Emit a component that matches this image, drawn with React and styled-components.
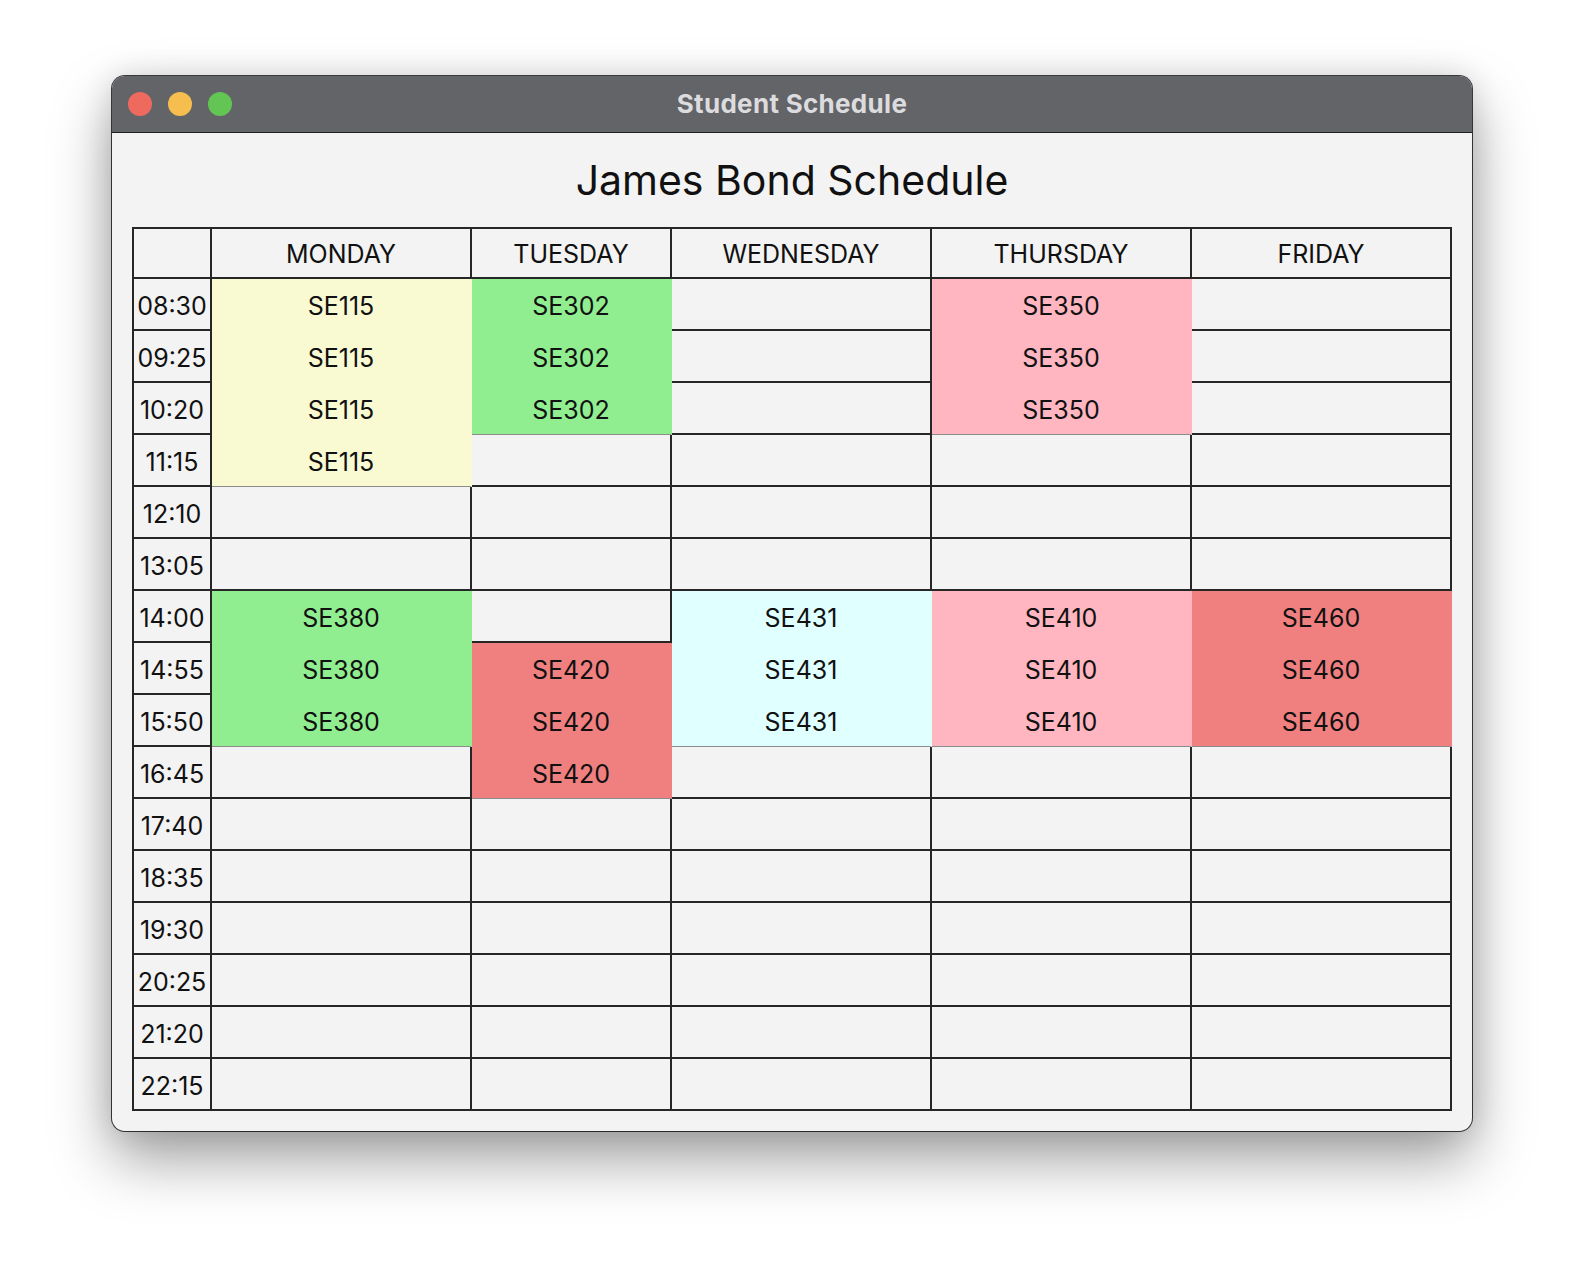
import React from 'react';
import styled, { createGlobalStyle } from 'styled-components';

const GlobalStyle = createGlobalStyle`
  html, body {
    margin: 0;
    padding: 0;
    background: #ffffff;
  }
  body {
    font-family: Inter, "Liberation Sans", sans-serif;
  }
`;

const times = [
  '08:30', '09:25', '10:20', '11:15', '12:10', '13:05', '14:00', '14:55',
  '15:50', '16:45', '17:40', '18:35', '19:30', '20:25', '21:20', '22:15',
];

const days = ['MONDAY', 'TUESDAY', 'WEDNESDAY', 'THURSDAY', 'FRIDAY'];

// course blocks: day index, first row, last row, label, colour
const courses = [
  { day: 0, from: 0, to: 3, code: 'SE115', color: '#fafad2' },
  { day: 0, from: 6, to: 8, code: 'SE380', color: '#90ee90' },
  { day: 1, from: 0, to: 2, code: 'SE302', color: '#90ee90' },
  { day: 1, from: 7, to: 9, code: 'SE420', color: '#f08080' },
  { day: 2, from: 6, to: 8, code: 'SE431', color: '#e0ffff' },
  { day: 3, from: 0, to: 2, code: 'SE350', color: '#ffb6c1' },
  { day: 3, from: 6, to: 8, code: 'SE410', color: '#ffb6c1' },
  { day: 4, from: 6, to: 8, code: 'SE460', color: '#f08080' },
];

const findCourse = (day, row) =>
  courses.find(c => c.day === day && row >= c.from && row <= c.to);

const App = () => {
  return (
    <>
      <GlobalStyle />
      <Page>
        <Window>
          <TitleBar>
            <Lights>
              <Light color="#ee6a5f" />
              <Light color="#f5be4f" />
              <Light color="#62c554" />
            </Lights>
            <WindowTitle>Student Schedule</WindowTitle>
          </TitleBar>
          <Content>
            <Heading>James Bond Schedule</Heading>
            <Grid>
              <HeadCell />
              {days.map(d => (
                <HeadCell key={d}>{d}</HeadCell>
              ))}
              {times.map((t, row) => (
                <React.Fragment key={t}>
                  <TimeCell>{t}</TimeCell>
                  {days.map((d, day) => {
                    const c = findCourse(day, row);
                    if (!c) return <Cell key={d} />;
                    return (
                      <CourseCell key={d} color={c.color} last={row === c.to}>
                        {c.code}
                      </CourseCell>
                    );
                  })}
                </React.Fragment>
              ))}
            </Grid>
          </Content>
        </Window>
      </Page>
    </>
  );
};

export default App;

const Page = styled.div`
  display: flex;
  justify-content: center;
  padding-top: 76px;
  padding-bottom: 100px;
`;

const Window = styled.div`
  width: 1360px;
  border-radius: 13px;
  overflow: hidden;
  background: #f3f3f3;
  box-shadow: 0 0 0 1px rgba(0, 0, 0, 0.75), 0 28px 60px rgba(0, 0, 0, 0.38),
    0 0 30px rgba(0, 0, 0, 0.12);
`;

const TitleBar = styled.div`
  position: relative;
  height: 56px;
  background: #636468;
  border-bottom: 1px solid #1e1e1e;
  display: flex;
  align-items: center;
  justify-content: center;
`;

const Lights = styled.div`
  position: absolute;
  left: 16px;
  top: 16px;
  display: flex;
  gap: 16px;
`;

const Light = styled.span`
  width: 24px;
  height: 24px;
  border-radius: 50%;
  background: ${p => p.color};
`;

const WindowTitle = styled.div`
  font-size: 26px;
  font-weight: 700;
  color: #dcdcdf;
  letter-spacing: 0.3px;
  margin-top: -2px;
`;

const Content = styled.div`
  padding: 0 20px 20px;
`;

const Heading = styled.h1`
  margin: 0;
  height: 94px;
  line-height: 94px;
  text-align: center;
  font-size: 41px;
  font-weight: 400;
  color: #111;
`;

const Grid = styled.div`
  display: grid;
  grid-template-columns: 78px 260px 200px 260px 260px 260px;
  grid-template-rows: 50px;
  grid-auto-rows: 52px;
  border-top: 2px solid #262626;
  border-left: 2px solid #262626;
  font-size: 25px;
  color: #111;
`;

const Cell = styled.div`
  box-sizing: border-box;
  display: flex;
  align-items: center;
  justify-content: center;
  border-right: 2px solid #262626;
  border-bottom: 2px solid #262626;
  background: #f3f3f3;
  padding-top: 4px;
`;

const HeadCell = styled(Cell)`
  padding-top: 2px;
`;

const TimeCell = styled(Cell)`
  padding-top: 4px;
`;

const CourseCell = styled(Cell)`
  background: ${p => p.color};
  border-right-color: transparent;
  border-bottom: ${p => (p.last ? '1px solid #8c8c8c' : '2px solid transparent')};
  padding-top: ${p => (p.last ? '3px' : '4px')};
`;
